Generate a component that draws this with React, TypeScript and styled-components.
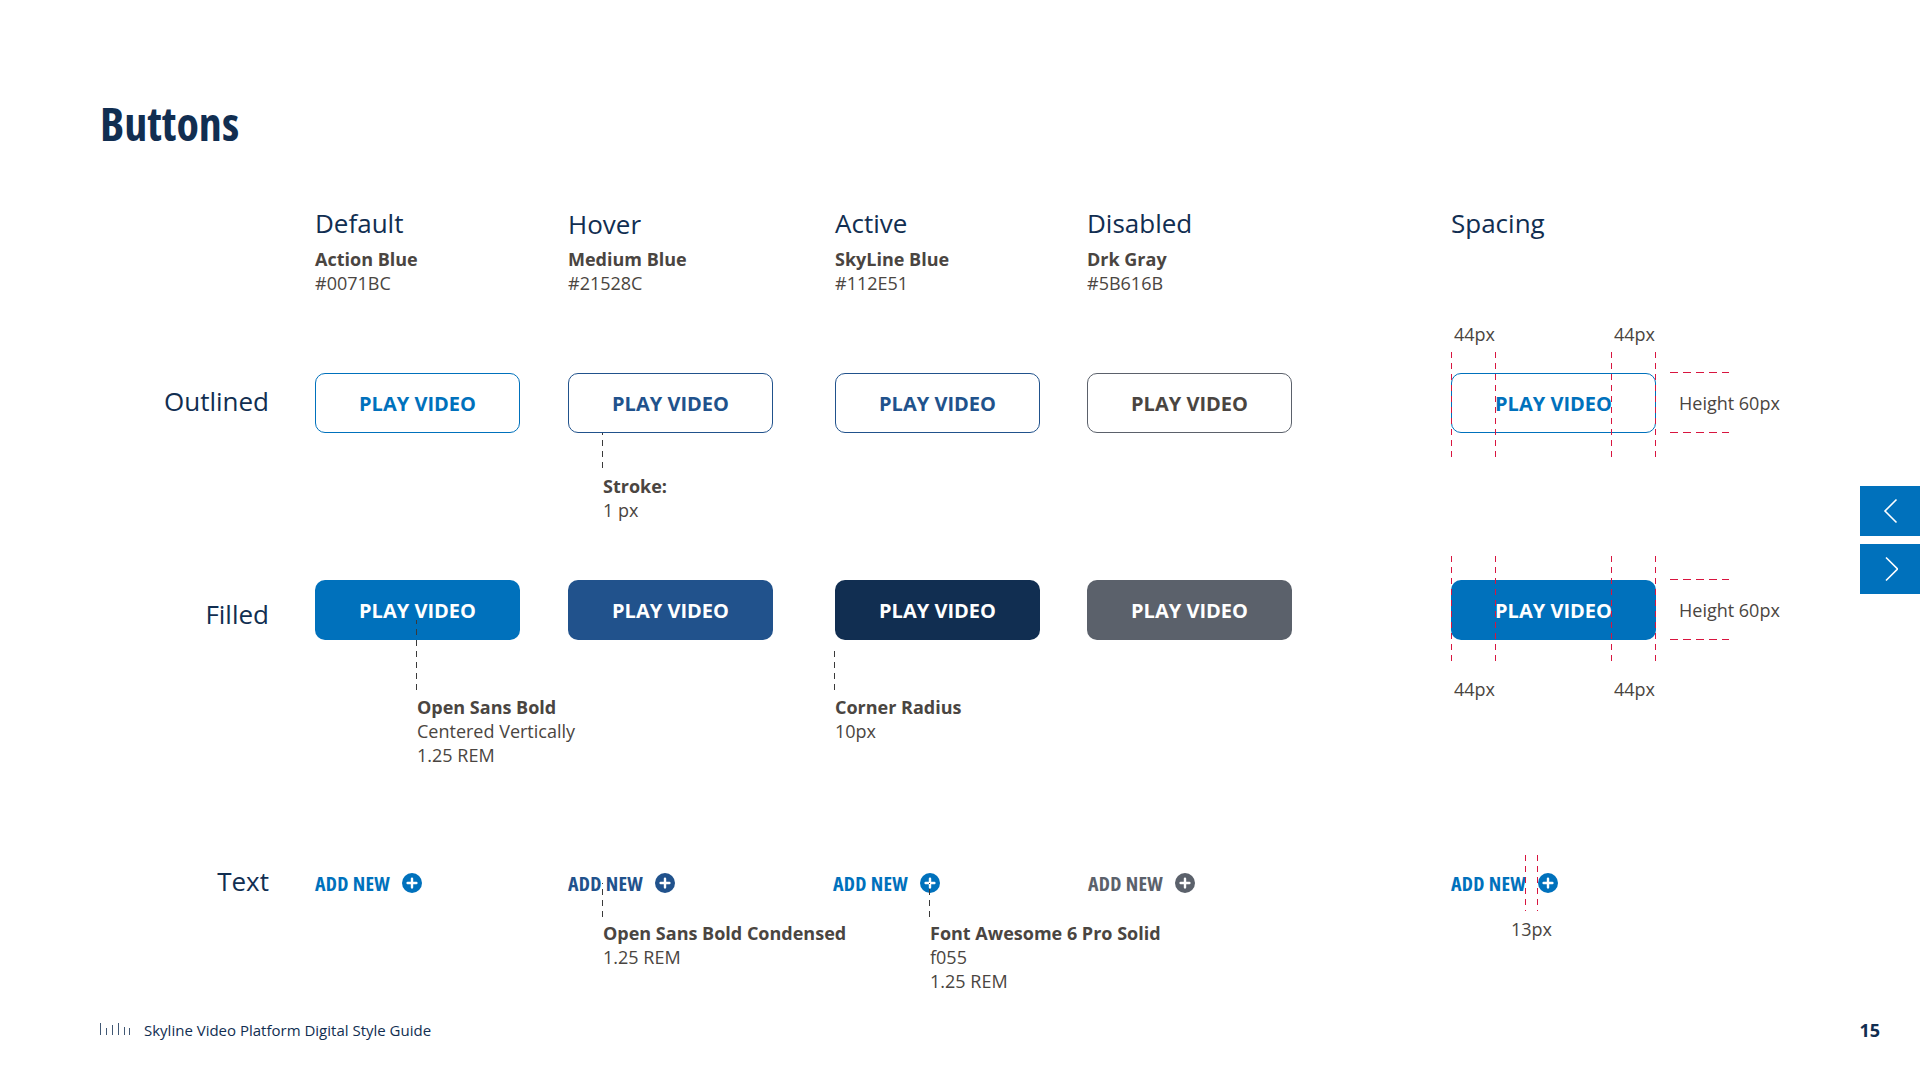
import React from 'react';
import styled, { createGlobalStyle, css } from 'styled-components';

const NAVY = '#112E51';
const ACTION = '#0071BC';
const MEDIUM = '#21528C';
const GRAY = '#5B616B';
const INK = '#4A4541';
const RED = '#D8153F';

const GlobalStyle = createGlobalStyle`
  html, body { margin: 0; padding: 0; background: #fff; }
  body { font-family: "Open Sans", "Liberation Sans", sans-serif; color: ${INK}; }
`;

// --- Styled Components ---
const Page = styled.div`
  position: relative;
  width: 1920px;
  height: 1080px;
  overflow: hidden;
  padding: 91px 0 0 100px;
  box-sizing: border-box;
`;
const Title = styled.h1`
  margin: 0;
  height: 67px;
  font-size: 46px;
  line-height: 64px;
  font-weight: 700;
  color: ${NAVY};
  font-stretch: 75%;
`;
const Board = styled.div`
  display: grid;
  grid-template-columns: 215px 253px 267px 252px 364px 300px;
  grid-template-rows: 215px 207px 288px 180px;
`;
const RowLabel = styled.div<{ $offset: number }>`
  margin-top: ${(p) => p.$offset}px;
  padding-right: 46px;
  text-align: right;
  font-size: 26px;
  line-height: 36px;
  color: ${NAVY};
`;
const Heading = styled.div`
  padding-top: 47px;
`;
const HeadingTitle = styled.div<{ $nudge?: number }>`
  font-size: 26px;
  line-height: 36px;
  color: ${NAVY};
  margin-top: ${(p) => p.$nudge || 0}px;
  margin-bottom: ${(p) => 6 - (p.$nudge || 0)}px;
`;
const Note = styled.div<{ $left?: number; $top?: number }>`
  font-size: 18px;
  line-height: 24px;
  color: ${INK};
  margin-left: ${(p) => p.$left || 0}px;
  margin-top: ${(p) => p.$top || 0}px;
  white-space: nowrap;
  b { font-weight: 700; }
`;
const Cell = styled.div`
  position: relative;
`;
const PlayButton = styled.div<{ $color: string; $text?: string; $filled?: boolean }>`
  position: relative;
  width: 205px;
  height: 60px;
  box-sizing: border-box;
  display: flex;
  align-items: center;
  justify-content: center;
  border-radius: 10px;
  font-size: 20px;
  font-weight: 700;
  ${(p) =>
    p.$filled
      ? css`
          background: ${p.$color};
          color: #fff;
        `
      : css`
          background: #fff;
          border: 1px solid ${p.$color};
          color: ${p.$text || p.$color};
        `}
`;
const Leader = styled.div<{ $x: number; $y: number; $h: number }>`
  position: absolute;
  left: ${(p) => p.$x}px;
  top: ${(p) => p.$y}px;
  width: 1px;
  height: ${(p) => p.$h}px;
  background: repeating-linear-gradient(to top, #3a3a3a 0 6px, transparent 6px 11px);
`;
const GuideV = styled.div<{ $x: number; $y: number; $h: number }>`
  position: absolute;
  left: ${(p) => p.$x}px;
  top: ${(p) => p.$y}px;
  width: 1px;
  height: ${(p) => p.$h}px;
  background: repeating-linear-gradient(to bottom, ${RED} 0 6px, transparent 6px 11px);
`;
const GuideH = styled.div<{ $y: number }>`
  position: absolute;
  left: 219px;
  top: ${(p) => p.$y}px;
  width: 59px;
  height: 1px;
  background: repeating-linear-gradient(to right, ${RED} 0 8px, transparent 8px 13px);
`;
const Measure = styled.div<{ $x: number; $y: number }>`
  position: absolute;
  left: ${(p) => p.$x}px;
  top: ${(p) => p.$y}px;
  font-size: 18px;
  line-height: 24px;
  color: ${INK};
  white-space: nowrap;
`;
const TextButton = styled.div<{ $color: string; $shift?: number }>`
  display: flex;
  align-items: center;
  gap: 12px;
  height: 30px;
  margin-left: ${(p) => p.$shift || 0}px;
  color: ${(p) => p.$color};
  font-size: 20px;
  font-weight: 700;
  font-stretch: 75%;
  letter-spacing: 0.3px;
`;
const PlusDisc = styled.svg`
  flex: none;
  display: block;
`;
const NavRail = styled.div`
  position: absolute;
  right: 0;
  top: 486px;
  display: flex;
  flex-direction: column;
  gap: 8px;
`;
const NavButton = styled.div`
  width: 60px;
  height: 50px;
  background: ${ACTION};
  display: flex;
  align-items: center;
  justify-content: center;
`;
const Footer = styled.div`
  position: absolute;
  left: 100px;
  right: 40px;
  top: 1017px;
  display: flex;
  align-items: center;
  height: 26px;
  color: ${NAVY};
`;
const FooterText = styled.div`
  margin-left: 14px;
  font-size: 15px;
  flex: 1;
`;
const PageNumber = styled.div`
  font-size: 18px;
  font-weight: 700;
`;

const Plus = ({ color }: { color: string }) => (
  <PlusDisc width="20" height="20" viewBox="0 0 20 20">
    <circle cx="10" cy="10" r="10" fill={color} />
    <path d="M10 5.6v8.8M5.6 10h8.8" stroke="#fff" strokeWidth="2.4" strokeLinecap="round" />
  </PlusDisc>
);

const AddNew = ({ color, shift }: { color: string; shift?: number }) => (
  <TextButton $color={color} $shift={shift}>
    ADD NEW
    <Plus color={color} />
  </TextButton>
);

const SpacingGuides = ({ top, labelY }: { top: number; labelY: number }) => (
  <>
    {[0, 44, 160, 204].map((x) => (
      <GuideV key={x} $x={x} $y={top} $h={105} />
    ))}
    <Measure $x={3} $y={labelY}>44px</Measure>
    <Measure $x={163} $y={labelY}>44px</Measure>
    <GuideH $y={-1} />
    <GuideH $y={59} />
    <Measure $x={228} $y={18}>Height 60px</Measure>
  </>
);

const FooterBars = () => (
  <svg width="30" height="18" viewBox="0 0 30 18">
    {[
      [0.5, 2],
      [6.5, 7],
      [12.5, 4],
      [18.5, 2],
      [24.5, 6],
      [29.5, 7],
    ].map(([x, y1], i) => (
      <line key={i} x1={x} x2={x} y1={y1} y2={14} stroke={NAVY} strokeOpacity="0.8" strokeWidth="1" />
    ))}
  </svg>
);

const columns = [
  { title: 'Default', name: 'Action Blue', hex: '#0071BC' },
  { title: 'Hover', name: 'Medium Blue', hex: '#21528C', nudge: 1 },
  { title: 'Active', name: 'SkyLine Blue', hex: '#112E51' },
  { title: 'Disabled', name: 'Drk Gray', hex: '#5B616B' },
];

const App = () => (
  <Page>
    <GlobalStyle />
    <Title>Buttons</Title>
    <Board>
      <div />
      {columns.map((c) => (
        <Heading key={c.title}>
          <HeadingTitle $nudge={c.nudge}>{c.title}</HeadingTitle>
          <Note>
            <b>{c.name}</b>
            <br />
            {c.hex}
          </Note>
        </Heading>
      ))}
      <Heading>
        <HeadingTitle>Spacing</HeadingTitle>
      </Heading>

      <RowLabel $offset={10}>Outlined</RowLabel>
      <Cell>
        <PlayButton $color={ACTION}>PLAY VIDEO</PlayButton>
      </Cell>
      <Cell>
        <PlayButton $color={MEDIUM}>PLAY VIDEO</PlayButton>
        <Leader $x={34} $y={60} $h={35} />
        <Note $left={35} $top={41}>
          <b>Stroke:</b>
          <br />1 px
        </Note>
      </Cell>
      <Cell>
        <PlayButton $color={MEDIUM}>PLAY VIDEO</PlayButton>
      </Cell>
      <Cell>
        <PlayButton $color={GRAY} $text={INK}>PLAY VIDEO</PlayButton>
      </Cell>
      <Cell>
        <PlayButton $color={ACTION}>PLAY VIDEO</PlayButton>
        <SpacingGuides top={-21} labelY={-51} />
      </Cell>

      <RowLabel $offset={16}>Filled</RowLabel>
      <Cell>
        <PlayButton $color={ACTION} $filled>PLAY VIDEO</PlayButton>
        <Leader $x={101} $y={40} $h={70} />
        <Note $left={102} $top={55}>
          <b>Open Sans Bold</b>
          <br />
          Centered Vertically
          <br />
          1.25 REM
        </Note>
      </Cell>
      <Cell>
        <PlayButton $color={MEDIUM} $filled>PLAY VIDEO</PlayButton>
      </Cell>
      <Cell>
        <PlayButton $color={NAVY} $filled>PLAY VIDEO</PlayButton>
        <Leader $x={-1} $y={68} $h={42} />
        <Note $top={55}>
          <b>Corner Radius</b>
          <br />
          10px
        </Note>
      </Cell>
      <Cell>
        <PlayButton $color={GRAY} $filled>PLAY VIDEO</PlayButton>
      </Cell>
      <Cell>
        <PlayButton $color={ACTION} $filled>PLAY VIDEO</PlayButton>
        <SpacingGuides top={-24} labelY={97} />
      </Cell>

      <RowLabel $offset={-5}>Text</RowLabel>
      <Cell>
        <AddNew color={ACTION} />
      </Cell>
      <Cell>
        <AddNew color={MEDIUM} />
        <Leader $x={34} $y={15} $h={34} />
        <Note $left={35} $top={23}>
          <b>Open Sans Bold Condensed</b>
          <br />
          1.25 REM
        </Note>
      </Cell>
      <Cell>
        <AddNew color={ACTION} shift={-2} />
        <Leader $x={94} $y={15} $h={34} />
        <Note $left={95} $top={23}>
          <b>Font Awesome 6 Pro Solid</b>
          <br />
          f055
          <br />
          1.25 REM
        </Note>
      </Cell>
      <Cell>
        <AddNew color={GRAY} shift={1} />
      </Cell>
      <Cell>
        <AddNew color={ACTION} />
        <GuideV $x={74} $y={-13} $h={56} />
        <GuideV $x={86} $y={-13} $h={56} />
        <Measure $x={60} $y={49}>13px</Measure>
      </Cell>
    </Board>
    <NavRail>
      <NavButton>
        <svg width="16" height="26" viewBox="0 0 16 26" fill="none">
          <path d="M14.5 1.5 3 13l11.5 11.5" stroke="#fff" strokeWidth="1.6" />
        </svg>
      </NavButton>
      <NavButton>
        <svg width="16" height="26" viewBox="0 0 16 26" fill="none">
          <path d="M4 1.5 15.5 13 4 24.5" stroke="#fff" strokeWidth="1.6" />
        </svg>
      </NavButton>
    </NavRail>
    <Footer>
      <FooterBars />
      <FooterText>Skyline Video Platform Digital Style Guide</FooterText>
      <PageNumber>15</PageNumber>
    </Footer>
  </Page>
);

export default App;
